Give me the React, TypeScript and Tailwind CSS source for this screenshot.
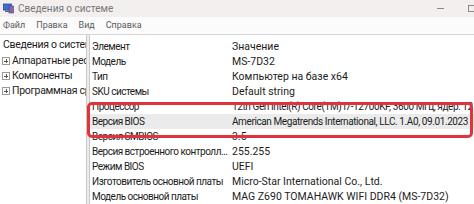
import React from "react";

const rows: [string, string, boolean?, boolean?][] = [
  ["Элемент", "Значение"],
  ["Модель", "MS-7D32"],
  ["Тип", "Компьютер на базе x64"],
  ["SKU системы", "Default string"],
  ["Процессор", "12th Gen Intel(R) Core(TM) i7-12700KF, 3600 МГц, ядер: 12", false, true],
  ["Версия BIOS", "American Megatrends International, LLC. 1.A0, 09.01.2023", true, true],
  ["Версия SMBIOS", "3.5"],
  ["Версия встроенного контроллера", "255.255"],
  ["Режим BIOS", "UEFI"],
  ["Изготовитель основной платы", "Micro-Star International Co., Ltd."],
  ["Модель основной платы", "MAG Z690 TOMAHAWK WIFI DDR4 (MS-7D32)"],
];

const tree = ["Аппаратные ресурсы", "Компоненты", "Программная среда"];

function AppIcon() {
  return (
    <svg width="11" height="11" viewBox="0 0 11 11">
      <rect x="0.5" y="1" width="8" height="6" fill="#3b6fd6" stroke="#2a4a9a" strokeWidth="0.8" />
      <rect x="6" y="3" width="4.5" height="7" fill="#7d6bb0" stroke="#4b3f7a" strokeWidth="0.6" />
      <rect x="2" y="7.5" width="4" height="1.5" fill="#5a6070" />
    </svg>
  );
}

export default function App() {
  return (
    <div
      className="relative w-[474px] h-[204px] overflow-hidden bg-white text-[#1c1c1c]"
      style={{ fontFamily: 'Roboto, "Noto Sans", sans-serif' }}
    >
      <div className="h-[17px] bg-[#f3efef] flex items-center pl-[3px]">
        <AppIcon />
        <span className="ml-[4px] text-[10px] text-[#777]">Сведения о системе</span>
        <div className="ml-auto flex items-center gap-[24px]">
          <div className="w-[7px] h-px bg-[#8a8a8a]" />
          <div className="w-[8px] h-[7px] border border-[#8a8a8a] mr-[-2px]" />
        </div>
      </div>
      <div className="h-[17px] bg-[#fbfbfb] flex items-center gap-[11px] pl-[3px] text-[9px] text-[#5a5a5a]">
        <span>Файл</span>
        <span>Правка</span>
        <span>Вид</span>
        <span>Справка</span>
      </div>
      <div className="h-px bg-[#d4d4d4]" />
      <div className="flex h-[169px]">
        <div className="w-[86px] shrink-0 overflow-hidden text-[10.5px] leading-[14px] pt-[3px] whitespace-nowrap tracking-[-0.3px]">
          <div className="pl-[3px] h-[15px]">Сведения о системе</div>
          {tree.map((t) => (
            <div key={t} className="flex items-center h-[14px] pl-[2px] mt-px">
              <span className="w-[8px] h-[8px] border border-[#9a9a9a] relative shrink-0 mr-[2px] flex items-center justify-center">
                <span className="w-[4px] h-px bg-[#555]" />
                <span className="absolute w-px h-[4px] bg-[#555]" />
              </span>
              <span>{t}</span>
            </div>
          ))}
        </div>
        <div className="w-[4px] shrink-0 border-l border-r border-[#c8c8c8] bg-[#ececec]" />
        <div className="flex-1 pt-[4px] overflow-hidden">
          {rows.map(([k, v, sel, tight]) => (
            <div
              key={k}
              className={`flex h-[15px] items-center whitespace-nowrap ${sel ? "bg-[#ebebeb]" : ""}`}
            >
              <div className="w-[142px] shrink-0 pl-[2px] pr-[4px] overflow-hidden text-ellipsis text-[10px] tracking-[-0.5px]">
                {k}
              </div>
              <div
                className={`overflow-hidden ${tight ? "text-[10px] tracking-[-0.4px]" : "text-[10.5px]"}`}
              >
                {v}
              </div>
            </div>
          ))}
        </div>
      </div>
      <div className="absolute left-[87px] top-[102px] w-[386px] h-[36px] border-[3px] border-[#e2323c] rounded-[5px]" />
    </div>
  );
}
